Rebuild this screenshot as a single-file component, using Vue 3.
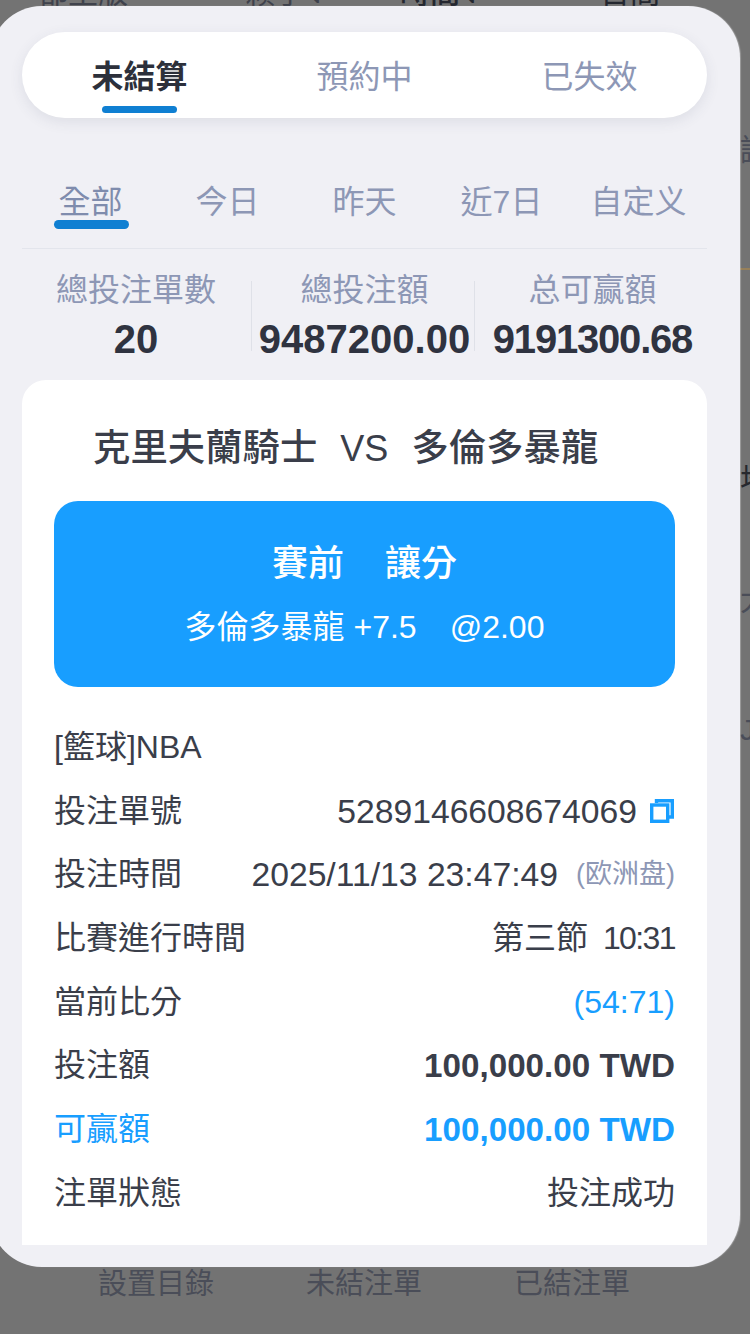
<template>
  <div class="page">
    <!-- dimmed page behind the sheet -->
    <div class="bg-head">
      <span v-for="h in bgHead" :key="h">{{ h }}</span>
    </div>
    <span class="bg-mark bg-a">讀</span>
    <span class="bg-mark bg-b">地</span>
    <span class="bg-mark bg-c">大</span>
    <span class="bg-mark bg-d">J</span>
    <i class="bg-line"></i>
    <div class="bg-nav">
      <span v-for="n in bgNav" :key="n">{{ n }}</span>
    </div>

    <div class="sheet">
      <div class="tabs">
        <div v-for="(t, i) in tabs" :key="t" class="tab" :class="{ on: i === 0 }">{{ t }}</div>
      </div>

      <div class="filters">
        <div v-for="(f, i) in filters" :key="f" class="filter" :class="{ on: i === 0 }">{{ f }}</div>
      </div>

      <div class="stats">
        <div v-for="s in stats" :key="s.label" class="stat">
          <div class="stat-label">{{ s.label }}</div>
          <div class="stat-value">{{ s.value }}</div>
        </div>
      </div>

      <div class="card">
        <div class="match">克里夫蘭騎士<span class="vs">VS</span>多倫多暴龍</div>

        <div class="bet">
          <div class="bet-title">賽前<span class="bet-gap"></span>讓分</div>
          <div class="bet-sub">多倫多暴龍 +7.5<span class="bet-odds">@2.00</span></div>
        </div>

        <div class="league">[籃球]NBA</div>
        <div class="row">
          <span>投注單號</span>
          <span class="val"><b class="num">5289146608674069</b>
            <svg class="copy" width="24" height="24" viewBox="0 0 24 24" fill="none" stroke="#189eff" stroke-width="3.4">
              <path d="M6.5 4V1.7h15.8v16.3H19" />
              <rect x="1.7" y="6" width="16" height="16.3" />
            </svg>
          </span>
        </div>
        <div class="row">
          <span>投注時間</span>
          <span class="val"><b class="num">2025/11/13 23:47:49</b><small>(欧洲盘)</small></span>
        </div>
        <div class="row">
          <span>比賽進行時間</span>
          <span class="val">第三節<b class="clock">10:31</b></span>
        </div>
        <div class="row">
          <span>當前比分</span>
          <span class="val blue">(54:71)</span>
        </div>
        <div class="row">
          <span>投注額</span>
          <span class="val strong">100,000.00 TWD</span>
        </div>
        <div class="row blue">
          <span>可贏額</span>
          <span class="val strong">100,000.00 TWD</span>
        </div>
        <div class="row">
          <span>注單狀態</span>
          <span class="val">投注成功</span>
        </div>
      </div>
    </div>
  </div>
</template>

<script setup>
const bgHead = ['都主版', '赖了⇃', '時間⇃', '日間']
const bgNav = ['設置目錄', '未結注單', '已結注單']
const tabs = ['未結算', '預約中', '已失效']
const filters = ['全部', '今日', '昨天', '近7日', '自定义']
const stats = [
  { label: '總投注單數', value: '20' },
  { label: '總投注額', value: '9487200.00' },
  { label: '总可赢額', value: '9191300.68' }
]
</script>

<style>
html,
body {
  margin: 0;
  background: #737373;
}
</style>

<style scoped>
.page {
  position: relative;
  width: 750px;
  height: 1334px;
  overflow: hidden;
  background: #737373;
  font-family: "Liberation Sans", "Noto Sans CJK TC", sans-serif;
  color: #3a3e4a;
}

.bg-head {
  position: absolute;
  top: -22px;
  left: 0;
  width: 750px;
  height: 30px;
  font-size: 30px;
  line-height: 30px;
  color: #3f424c;
}
.bg-head span {
  position: absolute;
}
.bg-head span:nth-child(1) { left: 38px; }
.bg-head span:nth-child(2) { left: 245px; }
.bg-head span:nth-child(3) { left: 400px; color: #24272f; font-weight: 500; }
.bg-head span:nth-child(4) { left: 600px; color: #24272f; }

.bg-mark {
  position: absolute;
  left: 740px;
  font-size: 30px;
  line-height: 36px;
  color: #4a4d58;
}
.bg-a { top: 132px; }
.bg-b { top: 462px; color: #26282e; }
.bg-c { top: 582px; }
.bg-d { top: 712px; }
.bg-line {
  position: absolute;
  left: 740px;
  top: 268px;
  width: 10px;
  height: 2px;
  background: #97805a;
}

.bg-nav {
  position: absolute;
  top: 1267px;
  left: 0;
  display: flex;
  padding-left: 52px;
  font-size: 29px;
  line-height: 34px;
  color: #4a4d58;
}
.bg-nav span {
  width: 208px;
  text-align: center;
}

.sheet {
  position: absolute;
  top: 6px;
  left: -10px;
  width: 750px;
  height: 1261px;
  box-sizing: border-box;
  padding: 26px 33px 0 32px;
  overflow: hidden;
  background: #f0f0f5;
  border-radius: 52px;
  box-shadow: 1px 0 1px rgba(255, 255, 255, 0.3);
}

.tabs {
  display: flex;
  height: 86px;
  padding: 0 5px;
  background: #fff;
  border-radius: 43px;
  box-shadow: 0 4px 14px rgba(60, 70, 100, 0.1);
}
.tab {
  position: relative;
  flex: 1;
  text-align: center;
  font-size: 32px;
  line-height: 90px;
  color: #8d97b5;
}
.tab.on {
  font-weight: 700;
  color: #2c303b;
}
.tab.on::after {
  content: '';
  position: absolute;
  left: 50%;
  bottom: 5px;
  width: 75px;
  height: 7px;
  margin-left: -38px;
  background: #0f7fd2;
  border-radius: 4px;
}

.filters {
  display: flex;
  height: 130px;
  border-bottom: 1px solid #e3e5ec;
}
.filter {
  position: relative;
  flex: 0 0 137px;
  box-sizing: border-box;
  padding-top: 62px;
  text-align: center;
  font-size: 32px;
  line-height: 44px;
  color: #8d97b5;
}
.filter.on {
  color: #7f8cad;
}
.filter.on::after {
  content: '';
  position: absolute;
  left: 32px;
  top: 102px;
  width: 75px;
  height: 9px;
  background: #0f7fd2;
  border-radius: 5px;
}

.stats {
  display: grid;
  grid-template-columns: 229px 223px 233px;
  height: 131px;
}
.stat {
  position: relative;
  box-sizing: border-box;
  text-align: center;
}
.stat:first-child {
  padding-right: 1px;
}
.stat:nth-child(2),
.stat:nth-child(3) {
  padding-left: 4px;
}
.stat:nth-child(2)::before,
.stat:nth-child(3)::before {
  content: '';
  position: absolute;
  left: 0;
  top: 32px;
  width: 1px;
  height: 70px;
  background: #dfe1e8;
}
.stat-label {
  margin-top: 19px;
  font-size: 32px;
  line-height: 44px;
  color: #8d97b5;
}
.stat-value {
  margin-top: 5px;
  font-size: 40px;
  line-height: 44px;
  font-weight: 700;
  color: #2f3340;
  white-space: nowrap;
}
.stat:nth-child(3) .stat-value {
  letter-spacing: -1.2px;
}

.card {
  box-sizing: border-box;
  height: 865px;
  padding: 0 32px;
  background: #fff;
  border-radius: 24px 24px 0 0;
}
.match {
  padding: 44px 0 0 39px;
  height: 48px;
  font-size: 37.4px;
  line-height: 48px;
  font-weight: 500;
  color: #3a3e4a;
}
.vs {
  margin: 0 23px;
  font-size: 36px;
  font-weight: 400;
}

.bet {
  height: 186px;
  margin-top: 29px;
  text-align: center;
  color: #fff;
  background: #189eff;
  border-radius: 24px;
}
.bet-title {
  padding-top: 39px;
  font-size: 36px;
  line-height: 48px;
  font-weight: 500;
}
.bet-gap {
  display: inline-block;
  width: 41px;
}
.bet-sub {
  margin-top: 17px;
  font-size: 32px;
  line-height: 44px;
}
.bet-odds {
  margin-left: 33px;
}

.league,
.row {
  height: 63.7px;
  font-size: 32px;
  line-height: 63.7px;
}
.league {
  margin-top: 29px;
}
.row {
  display: flex;
  justify-content: space-between;
}
.val {
  display: flex;
  align-items: center;
  white-space: nowrap;
}
.num {
  font-size: 33.7px;
  font-weight: 400;
}
.clock {
  margin-left: 15px;
  font-size: 32px;
  font-weight: 400;
  letter-spacing: -1.6px;
}
.copy {
  margin: -2px 1px 0 13px;
}
small {
  margin-left: 18px;
  font-size: 27px;
  color: #8d97b5;
}
.strong {
  font-size: 33.2px;
  font-weight: 700;
}
.blue {
  color: #189eff;
}
</style>
